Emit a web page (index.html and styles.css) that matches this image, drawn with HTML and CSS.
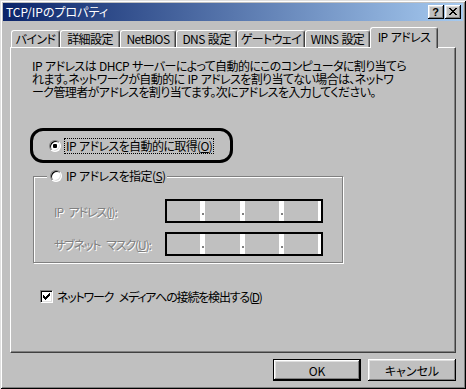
FILE: index.html
```html
<!DOCTYPE html>
<html lang="ja">
<head>
<meta charset="utf-8">
<title>TCP/IPのプロパティ</title>
<link rel="stylesheet" href="styles.css">
</head>
<body>
<div class="window">
  <div class="titlebar">
    <span class="title">TCP/IPのプロパティ</span>
    <div class="tb-btns">
      <span class="tb-btn help">?</span>
      <span class="tb-btn"><svg width="8" height="7" viewBox="0 0 8 7" shape-rendering="crispEdges"><path d="M0 0h2v1H0zM6 0h2v1H6zM1 1h2v1H1zM5 1h2v1H5zM2 2h4v1H2zM3 3h2v1H3zM2 4h4v1H2zM1 5h2v1H1zM5 5h2v1H5zM0 6h2v1H0zM6 6h2v1H6z" fill="#000"/></svg></span>
    </div>
  </div>
  <div class="body">
    <div class="tabs">
      <div class="tab t1">バインド</div>
      <div class="tab t2">詳細設定</div>
      <div class="tab t3">NetBIOS</div>
      <div class="tab t4">DNS 設定</div>
      <div class="tab t5">ゲートウェイ</div>
      <div class="tab t6">WINS 設定</div>
      <div class="tab t7 selected">IP アドレス</div>
    </div>
    <div class="panel">
      <div class="desc">
        <div class="desc-line">IP アドレスは DHCP サーバーによって自動的にこのコンピュータに割り当てら</div>
        <div class="desc-line">れます。ネットワークが自動的に IP アドレスを割り当てない場合は、ネットワ</div>
        <div class="desc-line">ーク管理者がアドレスを割り当てます。次にアドレスを入力してください。</div>
      </div>
      <div class="auto-box">
        <span class="radio checked"></span>
        <span class="focus">IP アドレスを自動的に取得(<u>O</u>)</span>
      </div>
      <div class="group">
        <div class="legend">
          <span class="radio"></span>
          <span class="legend-text">IP アドレスを指定(<u>S</u>)</span>
        </div>
        <div class="field-row first">
          <span class="field-label disabled">IP アドレス(<u>I</u>):</span>
          <div class="ip-box">
            <span class="seg s1"></span><span class="sep"></span>
            <span class="seg s2"></span><span class="sep"></span>
            <span class="seg s3"></span><span class="sep"></span>
            <span class="seg s4"></span><span class="sep end"></span>
          </div>
        </div>
        <div class="field-row second">
          <span class="field-label disabled">サブネット マスク(<u>U</u>):</span>
          <div class="ip-box">
            <span class="seg s1"></span><span class="sep"></span>
            <span class="seg s2"></span><span class="sep"></span>
            <span class="seg s3"></span><span class="sep"></span>
            <span class="seg s4"></span><span class="sep end"></span>
          </div>
        </div>
      </div>
      <div class="check-row">
        <span class="checkbox"><svg width="7" height="7" viewBox="0 0 7 7" shape-rendering="crispEdges"><path d="M6 0h1v1H6zM5 1h2v1H5zM0 2h1v1H0zM4 2h3v1H4zM0 3h2v1H0zM3 3h3v1H3zM0 4h5v1H0zM1 5h3v1H1zM2 6h1v1H2z" fill="#000"/></svg></span>
        <span class="check-label">ネットワーク メディアへの接続を検出する(<u>D</u>)</span>
      </div>
    </div>
    <div class="buttons">
      <button class="btn default">OK</button>
      <button class="btn">キャンセル</button>
    </div>
  </div>
</div>
</body>
</html>
```

FILE: styles.css
```css
* { box-sizing: border-box; }
body {
  margin: 0;
  background: #c0c0c0;
  font-family: "Noto Sans CJK JP", "Noto Sans", sans-serif;
  font-size: 12px;
  color: #000;
  font-feature-settings: "palt";
  letter-spacing: -0.6px;
  word-spacing: 1px;
}
u { text-decoration: underline; text-underline-offset: 1px; }

.window {
  width: 466px;
  height: 389px;
  padding: 3px;
  background: #c0c0c0;
  box-shadow: inset 1px 1px #dfdfdf, inset -1px -1px #000, inset 2px 2px #fff, inset -2px -2px #808080;
  display: flex;
  flex-direction: column;
}

.titlebar {
  height: 18px;
  flex: none;
  display: flex;
  align-items: center;
  justify-content: space-between;
  padding: 0 2px 0 3px;
  background: linear-gradient(to right, #0a246a, #a6caf0);
}
.title { color: #fff; line-height: 18px; white-space: nowrap; letter-spacing: 0; }
.tb-btns { display: flex; gap: 1px; }
.tb-btn {
  width: 16px;
  height: 14px;
  background: #c0c0c0;
  box-shadow: inset -1px -1px #000, inset 1px 1px #fff, inset -2px -2px #808080, inset 2px 2px #dfdfdf;
  display: flex;
  align-items: center;
  justify-content: center;
  padding: 0 1px 1px 0;
  letter-spacing: 0;
}
.tb-btn.help {
  font-family: "Liberation Sans", sans-serif;
  font-weight: bold;
  font-size: 11px;
  line-height: 12px;
}

.body {
  flex: 1;
  display: flex;
  flex-direction: column;
  padding: 6px 7px 0 7px;
}

.tabs {
  display: flex;
  align-items: flex-end;
  height: 20px;
  padding-left: 1px;
  flex: none;
}
.tab {
  height: 17px;
  border-top: 1px solid #fff;
  border-left: 1px solid #fff;
  border-right: 1px solid #404040;
  box-shadow: inset -1px 0 #808080;
  border-radius: 3px 3px 0 0;
  display: flex;
  align-items: center;
  justify-content: center;
  white-space: nowrap;
  line-height: 14px;
}
.t1 { width: 49px; }
.t2 { width: 60px; }
.t3 { width: 56px; }
.t4 { width: 61px; }
.t5 { width: 68px; }
.t6 { width: 65px; }
.t7 { width: 68px; }
.tab.selected {
  height: 21px;
  margin-bottom: -1px;
  position: relative;
  z-index: 1;
  background: #c0c0c0;
  padding-bottom: 2px;
}

.panel {
  height: 306px;
  flex: none;
  border-top: 1px solid #fff;
  border-left: 1px solid #fff;
  border-right: 1px solid #404040;
  border-bottom: 1px solid #404040;
  box-shadow: inset -1px -1px #808080;
  padding: 11px 0 0 20px;
}

.desc { margin-left: 1px; }
.desc-line {
  height: 13px;
  line-height: 13px;
  white-space: nowrap;
}

.auto-box {
  margin: 30px 0 0 -1px;
  width: 203px;
  height: 35px;
  border: 3px solid #000;
  border-radius: 13px;
  display: flex;
  align-items: center;
  padding-left: 16px;
}

.radio {
  flex: none;
  width: 12px;
  height: 12px;
  border-radius: 50%;
  border: 1px solid;
  border-color: #808080 #fff #fff #808080;
  background: #fff;
  box-shadow: inset 1px 1px #000, inset -1px -1px #dfdfdf;
  display: flex;
  align-items: center;
  justify-content: center;
}
.radio.checked::after {
  content: "";
  width: 4px;
  height: 4px;
  border-radius: 1px;
  background: #000;
}

.focus {
  margin-left: 3px;
  border: 1px dotted #000;
  padding: 0 1px;
  line-height: 14px;
  white-space: nowrap;
}

.group {
  margin: 13px 0 0 2px;
  width: 310px;
  height: 87px;
  border: 1px solid #808080;
  box-shadow: 1px 1px #fff, inset 1px 1px #fff;
  padding-left: 20px;
}
.legend {
  display: flex;
  align-items: center;
  width: fit-content;
  height: 14px;
  margin: -8px 0 0 -7px;
  padding: 0 2px 0 3px;
  background: #c0c0c0;
}
.legend-text {
  margin-left: 4px;
  line-height: 14px;
  white-space: nowrap;
}

.field-row {
  display: flex;
  align-items: center;
  height: 24px;
}
.field-row.first { margin-top: 16px; }
.field-row.second { margin-top: 9px; }
.field-label {
  width: 111px;
  white-space: nowrap;
  letter-spacing: -1.1px;
  word-spacing: 4px;
}
.disabled {
  color: #808080;
  text-shadow: 1px 1px 0 #fff;
}

.ip-box {
  width: 158px;
  height: 24px;
  display: flex;
  border: 2px solid #000;
}
.seg { background: #c0c0c0; height: 100%; }
.s1 { width: 33px; }
.s2 { width: 35px; }
.s3 { width: 34px; }
.s4 { width: 34px; }
.sep {
  width: 5px;
  height: 100%;
  background: #fff;
  display: flex;
  justify-content: center;
  align-items: flex-end;
  padding-bottom: 6px;
}
.sep::after {
  content: "";
  width: 2px;
  height: 2px;
  background: #808080;
}
.sep.end { width: 3px; }
.sep.end::after { display: none; }

.check-row {
  margin: 27px 0 0 9px;
  display: flex;
  align-items: center;
  height: 13px;
}
.checkbox {
  width: 13px;
  height: 13px;
  flex: none;
  background: #fff;
  border: 1px solid;
  border-color: #808080 #fff #fff #808080;
  box-shadow: inset 1px 1px #000, inset -1px -1px #dfdfdf;
  display: flex;
  align-items: center;
  justify-content: center;
}
.check-label {
  margin-left: 4px;
  line-height: 13px;
  white-space: nowrap;
  letter-spacing: -1.2px;
  word-spacing: 4px;
}

.buttons {
  display: flex;
  justify-content: flex-end;
  gap: 7px;
  margin-top: 6px;
}
.btn {
  width: 88px;
  height: 22px;
  font-family: inherit;
  font-size: 12px;
  font-feature-settings: "palt";
  letter-spacing: 0;
  color: #000;
  background: #c0c0c0;
  border: none;
  padding: 0;
  box-shadow: inset -1px -1px #000, inset 1px 1px #fff, inset -2px -2px #808080, inset 2px 2px #dfdfdf;
}
.btn.default {
  border: 1px solid #000;
}
```
